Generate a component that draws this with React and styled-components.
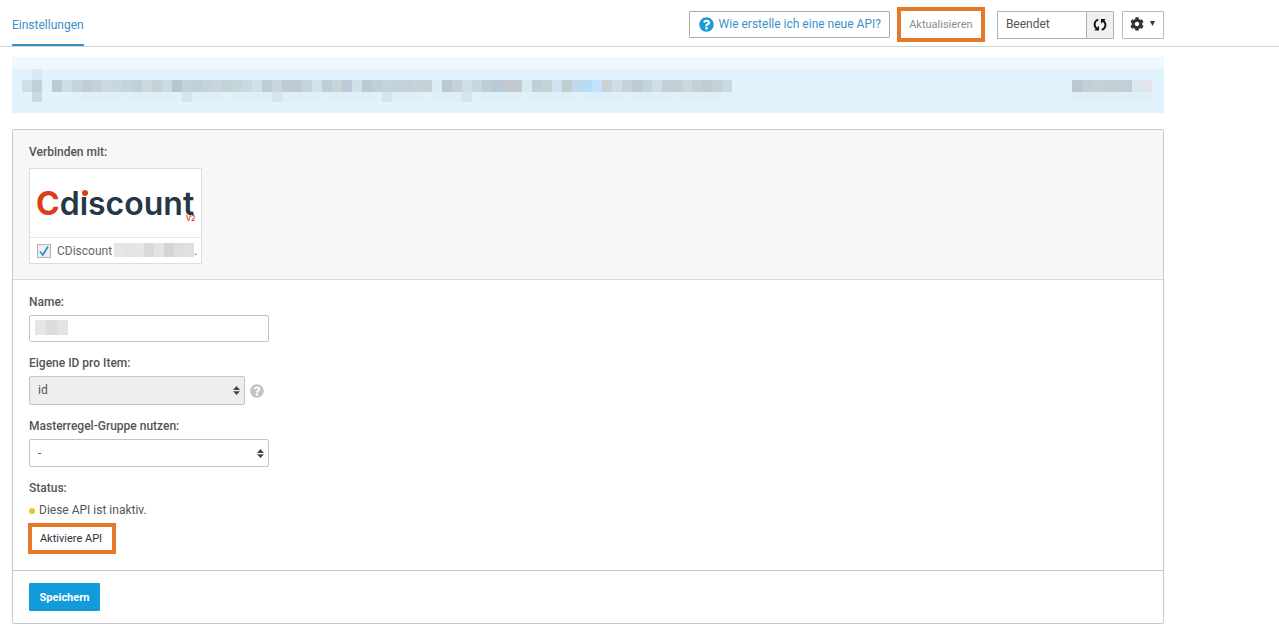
import React from "react";
import styled, { createGlobalStyle } from "styled-components";
import { FaCog, FaQuestionCircle } from "react-icons/fa";

const GlobalStyle = createGlobalStyle`
  *, *::before, *::after { box-sizing: border-box; }
  body {
    margin: 0;
    background: #fff;
    color: #555;
    font: 12px/16px Roboto, "Liberation Sans", sans-serif;
  }
  button, input, select { font: inherit; color: inherit; margin: 0; }
`;

const Header = styled.header`
  display: flex;
  justify-content: space-between;
  min-height: 47px;
  padding: 0 9% 0 12px;
  border-bottom: 1px solid #d3d3d3;
`;

const Tab = styled.a`
  display: flex;
  align-items: center;
  padding-top: 6px;
  border-bottom: 2px solid #3a8fc4;
  color: #3a8fc4;
  text-decoration: none;
`;

const Toolbar = styled.div`
  display: flex;
  align-items: center;
  gap: 7px;
  padding-top: 3px;
`;

const Button = styled.button`
  display: inline-flex;
  align-items: center;
  justify-content: center;
  gap: 6px;
  height: 28px;
  padding: 0 8px;
  border: 1px solid #b9b9b9;
  border-radius: 1px;
  background: #fff;
  color: #333;
  white-space: nowrap;
`;

const HelpLink = styled.a`
  display: inline-flex;
  align-items: center;
  gap: 5px;
  height: 27px;
  padding: 0 8px 0 9px;
  border: 1px solid #aaa;
  border-radius: 1px;
  color: #3c92c8;
  text-decoration: none;
  white-space: nowrap;

  svg { color: #199bd3; }
  span { padding-bottom: 2px; }
`;

const MarkedButton = styled(Button)`
  height: ${(p) => (p.$tall ? 35 : 31)}px;
  width: 88px;
  padding: 0;
  border: 4px solid #e5792a;
  border-radius: 0;
  color: ${(p) => (p.$muted ? "#8c8c8c" : "#333")};
  font-size: 11px;
`;

const Group = styled.div`
  display: flex;
  margin: 0 1px 0 5px;
`;

const StateField = styled.input`
  width: 89px;
  height: 28px;
  padding: 0 8px 2px;
  border: 1px solid #b0b0b0;
  border-right: 0;
  border-radius: 1px 0 0 1px;
  background: #fff;
`;

const ReloadButton = styled(Button)`
  width: 28px;
  padding: 0;
  border-color: #b0b0b0;
  background: #f0f0f0;
`;

const MenuButton = styled(Button)`
  width: 42px;
  padding: 0 0 2px;
`;

const Content = styled.main`
  padding: 10px 9% 11px 12px;
`;

const Notice = styled.div`
  height: 56px;
  margin-bottom: 16px;
  padding: 12px 12px 0 10px;
  background: linear-gradient(#f0f8fe 12px, #e1f3fd 12px);
`;

const NoticeLine = styled.div`
  display: flex;
  justify-content: space-between;
  height: ${(p) => p.$height}px;
`;

const Mosaic = styled.div`
  display: flex;
  height: ${(p) => p.$height}px;
`;

const Cell = styled.span`
  width: ${(p) => p.$width}px;
  background: ${(p) => p.$color};
`;

const Panel = styled.form`
  border: 1px solid #c8c8c8;
  border-radius: 2px;
`;

const Connect = styled.section`
  padding: 14px 16px 15px;
  background: #f7f7f7;
  border-bottom: 1px solid #d9d9d9;
`;

const Heading = styled.div`
  font-weight: 500;
`;

const Card = styled.div`
  width: 173px;
  margin-top: 8px;
  border: 1px solid #dedede;
  background: #fff;
`;

const LogoArea = styled.div`
  height: 68px;

  svg { display: block; }
`;

const CardLabel = styled.label`
  display: flex;
  align-items: center;
  height: 26px;
  padding-left: 7px;
  border-top: 1px solid #e8e8e8;
  color: #666;
`;

const AccountName = styled.span`
  display: flex;
  margin-left: 2px;
`;

const CheckHolder = styled.span`
  position: relative;
  display: flex;
  margin-right: 6px;

  svg {
    position: absolute;
    inset: 0;
    pointer-events: none;
  }
`;

const CheckBox = styled.input`
  appearance: none;
  width: 14px;
  height: 14px;
  border: 1px solid #b4b4b4;
  background: #eee;
`;

const Fields = styled.section`
  display: flex;
  flex-direction: column;
  gap: 13px;
  padding: 14px 16px 16px;
`;

const Field = styled.div`
  display: flex;
  flex-direction: column;
  align-items: flex-start;
  gap: 5px;

  > label { font-weight: 500; }
  > button { margin-left: -1px; padding-right: 2px; }
`;

const Control = styled.div`
  position: relative;
  width: ${(p) => p.$width}px;
`;

const TextBox = styled.input`
  display: block;
  width: 100%;
  height: 27px;
  padding: 0 8px;
  border: 1px solid #c4c4c4;
  border-radius: 2px;
  background: #fff;
`;

const Hidden = styled.div`
  position: absolute;
  top: 5px;
  left: 6px;
  pointer-events: none;
`;

const Select = styled.select`
  appearance: none;
  display: block;
  width: 100%;
  height: ${(p) => (p.disabled ? 29 : 28)}px;
  padding: 0 8px 1px;
  border: 1px solid #c4c4c4;
  border-radius: 2px;
  background: ${(p) => (p.disabled ? "#eee" : "#fff")};
  opacity: 1;
`;

const Arrows = styled.svg`
  position: absolute;
  top: 10px;
  right: 5px;
  pointer-events: none;
`;

const WithHelp = styled.div`
  display: flex;
  align-items: center;
  gap: 5px;

  > svg { color: #c3c3c3; }
`;

const Status = styled.div`
  display: flex;
  align-items: center;
  gap: 4px;
  margin-top: 1px;
`;

const Dot = styled.span`
  width: 6px;
  height: 6px;
  border-radius: 50%;
  background: #e2c62c;
  margin-top: 2px;
`;

const Footer = styled.footer`
  padding: 12px 16px;
  border-top: 1px solid #c8c8c8;
`;

const SaveButton = styled(Button)`
  width: 71px;
  padding: 1px 0 0;
  border: 0;
  background: #129bdb;
  color: #fff;
  font-size: 11px;
  font-weight: 700;
`;

const MESSAGE = [
  "#cfdfe8", "#bfd0da", "#dff0f9", "#bdcad0", "#cddee6", "#c7d5d8", "#bfcdd5", "#c4d1d7",
  "#cbdae1", "#c8d8df", "#c7d5da", "#c2d1d7", "#cbdadf", "#c5d2d7", "#c9dae4", "#b8c7ce",
  "#c4d2d9", "#bfd0d9", "#c4d4dc", "#c8d6dc", "#c3d2d4", "#c6d5da", "#c8d9df", "#d0e1ea",
  "#bccdd4", "#c7d5dc", "#becbd3", "#c0cbd3", "#c5d3db", "#d2e1ea", "#bfced4", "#c7d5d6",
  "#bccbd6", "#d0e1e8", "#b9cbd5", "#bfd0d8", "#c5d4da", "#c3d1d8", "#c3d1de", "#c9d3d5",
  "#c4d1d8", "#dbecf2", "#bac9cf", "#c4d2d8", "#d0dfe7", "#c7d8de", "#bfcdd4", "#bac9d7",
  "#c2cad0", "#c2cad0", "#d7e9f1", "#bfd0d6", "#c5d3d6", "#d2e2ec", "#bfced3", "#c1d9eb",
  "#b9dcf6", "#c3e3fb", "#c6d2d4", "#cfdee5", "#c4d2d9", "#bdcbd0", "#c4d3d8", "#cfdde5",
  "#c2cfd6", "#c3d0d6", "#c9d8dd", "#c4d0d4", "#c0cdd1", "#c4d1d9", "#cbdae2",
];

// Descenders of the redacted line show up as darker cells in the row below.
const BELOW = MESSAGE.map((_, i) => {
  if (i === 1) return "#c7dbe5";
  if ([16, 25, 36, 44].includes(i)) return "#d3e5ee";
  if (i < 5) return "#e1f3fd";
  return i % 5 === 0 ? "#dff1fb" : "#ddeff9";
});

const ABOVE = ["#e1f3fd", "#d8ebf5"];
const ACTION = ["#bac9d1", "#c3cfd6", "#c4d1d6", "#c3d0d3", "#c3cfd5", "#bfced7", "#dbe8ef", "#e1e5eb"];
const ACCOUNT = ["#e6e6e6", "#e4e4e4", "#e6e6e6", "#dadada", "#e4e4e4", "#d5d5d5", "#dedede", "#e0e0e0"];

function Redacted({ colors, height, width = 10 }) {
  return (
    <Mosaic $height={height} aria-hidden="true">
      {colors.map((color, i) => (
        <Cell key={i} $color={color} $width={width} />
      ))}
    </Mosaic>
  );
}

function SortArrows() {
  return (
    <Arrows width="7" height="9" viewBox="0 0 7 9" fill="#444" aria-hidden="true">
      <path d="M0 4 3.500 0 7 4ZM0 5.200h7L3.500 9Z" />
    </Arrows>
  );
}

function ReloadIcon() {
  return (
    <svg width="14" height="14" viewBox="0 0 14 14" fill="none" aria-hidden="true">
      <path d="M5.300 1.600C1.200 2.800.300 7.400 3.600 10.600M8.700 11.800C12.800 10.600 13.700 6 10.400 2.800" stroke="#111" strokeWidth="1.900" />
      <path d="M6 7.700V12.400H1.300ZM8 5.700V1H12.700Z" fill="#111" />
    </svg>
  );
}

function CdiscountLogo() {
  return (
    <svg width="171" height="68" viewBox="0 0 171 68" role="img" aria-label="Cdiscount V2">
      <text x="6" y="46" fill="#263746" fontFamily="Inter, sans-serif" fontSize="32" fontWeight="600">
        <tspan fill="#dc3d12" fontWeight="700">C</tspan>discount
      </text>
      <rect x="50" y="19" width="9" height="8" fill="#fff" />
      <circle cx="55" cy="24" r="3" fill="#dc3d12" />
      <text x="156" y="52" fill="#dc3d12" fontFamily="Inter, sans-serif" fontSize="7" fontWeight="600">V2</text>
    </svg>
  );
}

export default function App() {
  return (
    <>
      <GlobalStyle />
      <Header>
        <Tab href="#einstellungen">Einstellungen</Tab>
        <Toolbar>
          <HelpLink href="#hilfe">
            <FaQuestionCircle size={15} />
            <span>Wie erstelle ich eine neue API?</span>
          </HelpLink>
          <MarkedButton type="button" $tall $muted>Aktualisieren</MarkedButton>
          <Group>
            <StateField aria-label="Zustand" readOnly value="Beendet" />
            <ReloadButton type="button" aria-label="Neu laden"><ReloadIcon /></ReloadButton>
          </Group>
          <MenuButton type="button" aria-label="Optionen">
            <FaCog size={14} />
            <svg width="5" height="5" viewBox="0 0 5 5" fill="#333" aria-hidden="true">
              <path d="M0 0h5L2.500 5Z" />
            </svg>
          </MenuButton>
        </Toolbar>
      </Header>

      <Content>
        <Notice>
          <NoticeLine $height={11}>
            <Redacted colors={ABOVE} height={11} />
          </NoticeLine>
          <NoticeLine $height={12}>
            <Redacted colors={MESSAGE} height={12} />
            <Redacted colors={ACTION} height={12} />
          </NoticeLine>
          <NoticeLine $height={10}>
            <Redacted colors={BELOW} height={10} />
            <Redacted colors={ACTION.map(() => "#ddeff9")} height={10} />
          </NoticeLine>
        </Notice>

        <Panel onSubmit={(e) => e.preventDefault()}>
          <Connect>
            <Heading>Verbinden mit:</Heading>
            <Card>
              <LogoArea><CdiscountLogo /></LogoArea>
              <CardLabel>
                <CheckHolder>
                  <CheckBox type="checkbox" defaultChecked />
                  <svg width="14" height="14" viewBox="0 0 14 14" fill="none" aria-hidden="true">
                    <path d="M3 7.500 5.800 11 11 2.500" stroke="#2b95d6" strokeWidth="1.800" />
                  </svg>
                </CheckHolder>
                CDiscount
                <AccountName>
                  <Redacted colors={ACCOUNT} height={14} />
                  .
                </AccountName>
              </CardLabel>
            </Card>
          </Connect>

          <Fields>
            <Field>
              <label htmlFor="name">Name:</label>
              <Control $width={240}>
                <TextBox id="name" type="text" />
                <Hidden><Redacted colors={["#e6e6e6", "#dddddd", "#e3e3e3"]} height={15} width={11} /></Hidden>
              </Control>
            </Field>
            <Field>
              <label htmlFor="item-id">Eigene ID pro Item:</label>
              <WithHelp>
                <Control $width={216}>
                  <Select id="item-id" disabled>
                    <option>id</option>
                  </Select>
                  <SortArrows />
                </Control>
                <FaQuestionCircle size={14} />
              </WithHelp>
            </Field>
            <Field>
              <label htmlFor="rule-group">Masterregel-Gruppe nutzen:</label>
              <Control $width={240}>
                <Select id="rule-group">
                  <option>-</option>
                </Select>
                <SortArrows />
              </Control>
            </Field>
            <Field>
              <Heading>Status:</Heading>
              <Status><Dot />Diese API ist inaktiv.</Status>
              <MarkedButton type="button">Aktiviere API</MarkedButton>
            </Field>
          </Fields>

          <Footer>
            <SaveButton type="submit">Speichern</SaveButton>
          </Footer>
        </Panel>
      </Content>
    </>
  );
}
